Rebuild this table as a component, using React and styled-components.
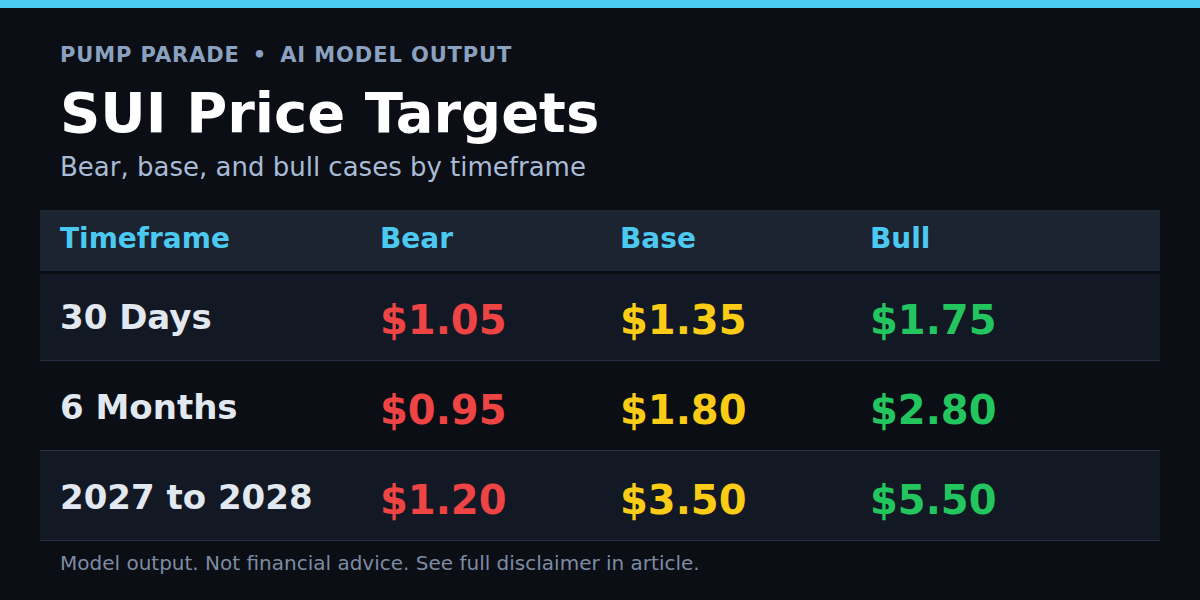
import React from 'react'
import styled, { createGlobalStyle } from 'styled-components'

const GlobalStyle = createGlobalStyle`
  html, body {
    margin: 0;
    padding: 0;
    background: #0b0e14;
  }

  body {
    font-family: "DejaVu Sans", Verdana, sans-serif;
  }
`

const rows = [
  { label: '30 Days', bear: '$1.05', base: '$1.35', bull: '$1.75' },
  { label: '6 Months', bear: '$0.95', base: '$1.80', bull: '$2.80' },
  { label: '2027 to 2028', bear: '$1.20', base: '$3.50', bull: '$5.50' },
]

const caseColors = {
  bear: '#ef4444',
  base: '#facc15',
  bull: '#22c55e',
}

const Card = styled.div`
  width: 1200px;
  height: 600px;
  overflow: hidden;
  background: #0b0e14;
  border-top: 8px solid #4cc9f0;
  box-sizing: border-box;
`

const Content = styled.div`
  padding: 37px 40px 0;
  display: flex;
  flex-direction: column;
`

const Intro = styled.header`
  padding-left: 20px;
  display: flex;
  flex-direction: column;
`

const Kicker = styled.div`
  font-size: 21px;
  line-height: 1;
  font-weight: 700;
  letter-spacing: 0.9px;
  color: #8ba1c0;
  white-space: nowrap;
`

const Dot = styled.span`
  margin: 0 13px;
`

const Title = styled.h1`
  margin: 19px 0 0;
  font-size: 56px;
  line-height: 1;
  font-weight: 700;
  color: #ffffff;
`

const Subtitle = styled.p`
  margin: 13px 0 0;
  font-size: 26px;
  line-height: 1;
  color: #a9bcd6;
`

const Table = styled.div`
  margin-top: 30px;
  display: flex;
  flex-direction: column;
`

const Row = styled.div`
  display: grid;
  grid-template-columns: 320px 240px 250px 1fr;
  height: ${(p) => (p.$head ? '61px' : '90px')};
  box-sizing: border-box;
  background: ${(p) => (p.$head ? '#1c2331' : p.$striped ? '#131924' : 'transparent')};
  border-bottom: ${(p) => (p.$head ? 'none' : '1px solid #243042')};
  box-shadow: ${(p) => (p.$first ? 'inset 0 3px 0 #0a0d12' : 'none')};
`

const HeadCell = styled.div`
  padding: 15px 0 0 20px;
  font-size: 28px;
  line-height: 1;
  font-weight: 700;
  color: #4cc9f0;
`

const Label = styled.div`
  padding: 29px 0 0 20px;
  font-size: 34px;
  line-height: 1;
  font-weight: 700;
  color: #e2e8f0;
  white-space: nowrap;
`

const Price = styled.div`
  padding: 29px 0 0 20px;
  font-size: 40px;
  line-height: 1;
  font-weight: 700;
  color: ${(p) => caseColors[p.$case]};
`

const Footnote = styled.p`
  margin: 12px 0 0;
  padding-left: 20px;
  font-size: 20px;
  line-height: 1;
  color: #7d8ca3;
`

export default function App() {
  return (
    <>
      <GlobalStyle />
      <Card>
        <Content>
          <Intro>
            <Kicker>
              PUMP PARADE<Dot>•</Dot>AI MODEL OUTPUT
            </Kicker>
            <Title>SUI Price Targets</Title>
            <Subtitle>Bear, base, and bull cases by timeframe</Subtitle>
          </Intro>

          <Table>
            <Row $head>
              <HeadCell>Timeframe</HeadCell>
              <HeadCell>Bear</HeadCell>
              <HeadCell>Base</HeadCell>
              <HeadCell>Bull</HeadCell>
            </Row>
            {rows.map((r, i) => (
              <Row key={r.label} $striped={i % 2 === 0} $first={i === 0}>
                <Label>{r.label}</Label>
                <Price $case="bear">{r.bear}</Price>
                <Price $case="base">{r.base}</Price>
                <Price $case="bull">{r.bull}</Price>
              </Row>
            ))}
          </Table>

          <Footnote>
            Model output. Not financial advice. See full disclaimer in article.
          </Footnote>
        </Content>
      </Card>
    </>
  )
}
